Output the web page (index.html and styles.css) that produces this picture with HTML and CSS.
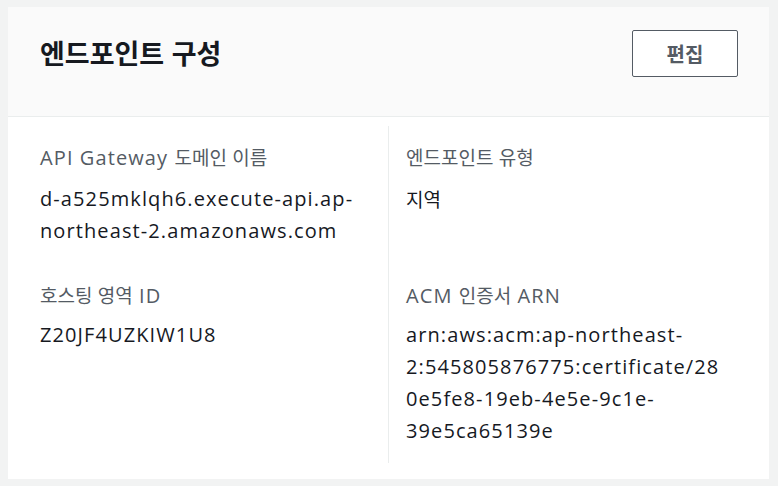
FILE: index.html
```html
<!DOCTYPE html>
<html lang="ko">
<head>
<meta charset="utf-8">
<title>엔드포인트 구성</title>
<link rel="stylesheet" href="styles.css">
</head>
<body>
<div class="card">
  <div class="card-header">
    <h2 class="title">엔드포인트 구성</h2>
    <button class="btn" type="button">편집</button>
  </div>
  <div class="card-body">
    <div class="cell row1">
      <div class="label">API Gateway <span class="ko">도메인 이름</span></div>
      <div class="value">d-a525mklqh6.execute-api.ap-northeast-2.amazonaws.com</div>
    </div>
    <div class="cell row1 divided">
      <div class="label"><span class="ko">엔드포인트 유형</span></div>
      <div class="value"><span class="ko">지역</span></div>
    </div>
    <div class="cell row2">
      <div class="label"><span class="ko">호스팅 영역</span> ID</div>
      <div class="value">Z20JF4UZKIW1U8</div>
    </div>
    <div class="cell row2 divided">
      <div class="label">ACM <span class="ko">인증서</span> ARN</div>
      <div class="value">arn:aws:acm:ap-northeast-2:545805876775:certificate/280e5fe8-19eb-4e5e-9c1e-39e5ca65139e</div>
    </div>
  </div>
</div>
</body>
</html>
```

FILE: styles.css
```css
html, body {
  background: #f2f3f3;
}
body {
  margin: 7px 9px 8px 8px;
  font-family: "Open Sans", "Noto Sans CJK KR", sans-serif;
  color: #16191f;
}
.card {
  background: #ffffff;
  box-shadow: 0 1px 1px 0 rgba(0, 28, 36, 0.5), 1px 1px 1px 0 rgba(0, 28, 36, 0.2), -1px 1px 1px 0 rgba(0, 28, 36, 0.2);
}
.card-header {
  background: #fafafa;
  border-bottom: 1px solid #eaeded;
  height: 110px;
  box-sizing: border-box;
  display: flex;
  align-items: center;
  justify-content: space-between;
  padding: 23px 31px 40px 32px;
}
.title {
  margin: 0;
  font-size: 27px;
  font-weight: 700;
  line-height: 36px;
  color: #16191f;
  font-family: "Noto Sans CJK KR", sans-serif;
}
.btn {
  width: 106px;
  height: 47px;
  background: #ffffff;
  border: 1px solid #545b64;
  border-radius: 2px;
  color: #545b64;
  font-family: "Noto Sans CJK KR", sans-serif;
  font-weight: 700;
  font-size: 20px;
  padding: 0;
}
.card-body {
  display: grid;
  grid-template-columns: 348px 1fr;
  padding: 9px 40px 16px 32px;
}
.cell {
  padding: 15px 0 18px;
}
.row2 {
  padding: 14px 0 16px;
}
.divided {
  border-left: 1px solid #eaeded;
  padding-left: 17px;
}
.cell:not(.divided) {
  padding-right: 20px;
}
.label {
  font-size: 20px;
  line-height: 32px;
  color: #545b64;
  margin-bottom: 9px;
  letter-spacing: 1.1px;
}
.row2 .label {
  margin-bottom: 7px;
}
.value {
  font-size: 20px;
  line-height: 32px;
  color: #16191f;
  letter-spacing: 1.1px;
  overflow-wrap: anywhere;
}
.ko {
  font-family: "Noto Sans CJK KR", sans-serif;
  font-size: 19px;
  letter-spacing: 0;
}
```
